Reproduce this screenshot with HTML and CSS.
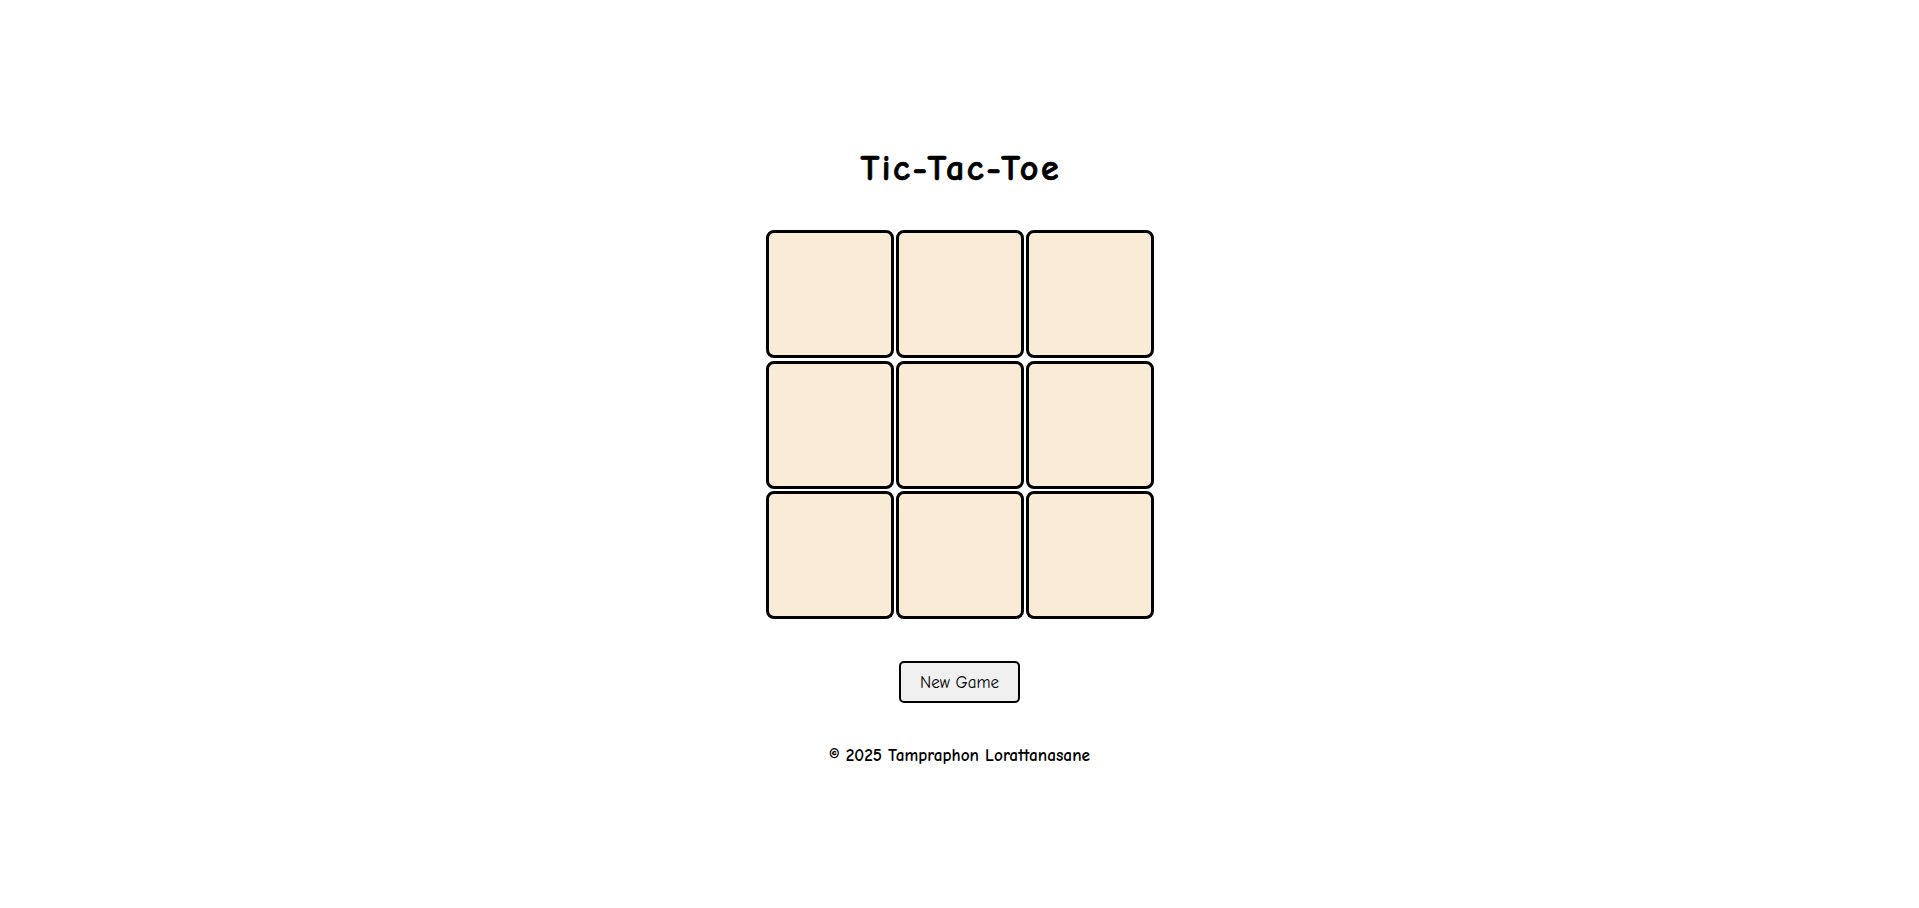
FILE: index.html
```html
<!DOCTYPE html>
<html lang="en">
<head>
<meta charset="utf-8">
<title>Tic-Tac-Toe</title>
<link rel="stylesheet" href="styles.css">
</head>
<body>
<main class="game">
  <h1 class="title">Tic-Tac-Toe</h1>
  <div class="board">
    <button class="cell" aria-label="cell 1"></button>
    <button class="cell" aria-label="cell 2"></button>
    <button class="cell" aria-label="cell 3"></button>
    <button class="cell" aria-label="cell 4"></button>
    <button class="cell" aria-label="cell 5"></button>
    <button class="cell" aria-label="cell 6"></button>
    <button class="cell" aria-label="cell 7"></button>
    <button class="cell" aria-label="cell 8"></button>
    <button class="cell" aria-label="cell 9"></button>
  </div>
  <button class="new-game">New Game</button>
  <footer class="footer">© 2025 Tampraphon Lorattanasane</footer>
</main>
</body>
</html>
```

FILE: styles.css
```css
html, body {
  margin: 0;
  padding: 0;
  background: #ffffff;
}

body {
  font-family: "Comic Sans MS", "Comic Neue", "Open Sans", sans-serif;
  color: #000000;
}

.game {
  display: flex;
  flex-direction: column;
  align-items: center;
  padding-top: 149px;
}

.title {
  margin: 0 0 41px;
  padding-left: 2.5px;
  font-size: 36px;
  line-height: 40px;
  font-weight: 700;
  letter-spacing: 2.5px;
  -webkit-text-stroke: 0.7px #000000;
}

.board {
  display: grid;
  grid-template-columns: repeat(3, 128px);
  grid-auto-rows: 128px;
  column-gap: 2px;
  row-gap: 2.5px;
}

.cell {
  box-sizing: border-box;
  margin: 0;
  padding: 0;
  width: 128px;
  height: 128px;
  background: #faebd7;
  border: 3px solid #000000;
  border-radius: 8px;
}

.new-game {
  box-sizing: border-box;
  margin: 42px 0 0;
  width: 121px;
  height: 42px;
  padding: 1px 0 0;
  background: #f0f0f0;
  border: 2px solid #000000;
  border-radius: 5px;
  font-family: inherit;
  font-size: 17px;
  color: #000000;
  display: flex;
  align-items: center;
  justify-content: center;
}

.footer {
  margin-top: 40px;
  font-size: 17.3px;
  line-height: 24px;
  font-weight: 700;
}
```
